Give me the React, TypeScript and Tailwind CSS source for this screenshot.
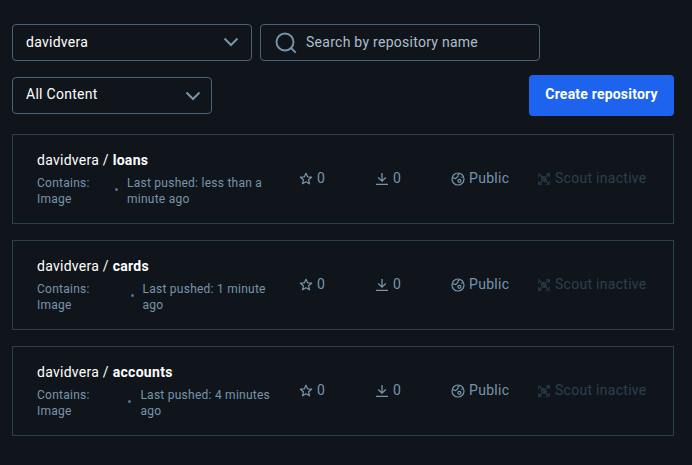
import React from "react";

type Repo = {
  name: string;
  pushed: [string, string];
  gap: string;
};

const repos: Repo[] = [
  { name: "loans", pushed: ["Last pushed: less than a", "minute ago"], gap: "w-[78px]" },
  { name: "cards", pushed: ["Last pushed: 1 minute", "ago"], gap: "w-[93.5px]" },
  { name: "accounts", pushed: ["Last pushed: 4 minutes", "ago"], gap: "w-[91.4px]" },
];

function Chevron() {
  return (
    <svg width="16" height="10" viewBox="0 0 16 10" fill="none" stroke="#7794AB" strokeWidth="2">
      <path d="M1.5 1.5 8 8l6.5-6.5" />
    </svg>
  );
}

function SearchIcon() {
  return (
    <svg width="22" height="22" viewBox="0 0 22 22" fill="none" stroke="#7794AB" strokeWidth="1.9">
      <circle cx="10" cy="10" r="8.5" />
      <path d="m16 16 4.7 4.7" />
    </svg>
  );
}

function StarIcon() {
  return (
    <svg className="mt-[2px]" width="14" height="14" viewBox="0 0 14 14" fill="none" stroke="currentColor" strokeWidth="1.2" strokeLinejoin="round">
      <path d="m7 1.2 1.6 3.6 4 .4-3 2.6.9 4L7 9.8l-3.5 2 .9-4-3-2.6 4-.4Z" />
    </svg>
  );
}

function DownloadIcon() {
  return (
    <svg className="mt-[2px]" width="12" height="12" viewBox="0 0 12 12" fill="none" stroke="currentColor" strokeWidth="1.3">
      <path d="M6 0v8M2.2 4.5 6 8.2l3.8-3.7M0 11.3h12" />
    </svg>
  );
}

function GlobeIcon() {
  return (
    <svg className="mt-[2px]" width="14" height="14" viewBox="0 0 14 14" fill="none" stroke="currentColor" strokeWidth="1.2">
      <circle cx="7" cy="7" r="6" />
      <path d="M1.3 5.6 4.6 6.6 7 4.2V2.8L9 1.6" />
      <circle cx="8.4" cy="8.8" r="1.5" />
      <path d="m9.8 5.4 2.6-.6" strokeWidth="0.9" />
    </svg>
  );
}

function ScoutIcon() {
  return (
    <svg className="mt-[2px]" width="12" height="12" viewBox="0 0 12 12" fill="none" stroke="currentColor" strokeWidth="1.2">
      <path d="m.4.4 11.2 11.2" />
      <path d="M11.5.5 8.4 3.6M.5 11.5l3.1-3.1" />
      <path d="M8.2.7h3.1v3.1M.7 8.2v3.1h3.1M.6 2.2v2.2M11.4 7.8v2M7.8 11.4h2" strokeWidth="1" />
      <path d="M4.6 3.7 7.2 4l1.1 3.2M3.6 4.8l.6 2.8 2.8.8" />
    </svg>
  );
}

function RepoCard({ name, pushed, gap }: Repo) {
  return (
    <article className="flex h-[90px] border border-[#2B404E] pl-6 text-[#7794AB]">
      <div className="w-[262px] shrink-0 pt-[15px]">
        <h2 className="whitespace-pre text-[14px] leading-[20px] text-white">
          <span className="tracking-[0.27px]">davidvera / </span>
          <span className="font-bold tracking-[0.3px]">{name}</span>
        </h2>
        <div className="mt-[5px] flex whitespace-nowrap text-[12px] leading-4 tracking-[0.25px]">
          <div className={gap + " shrink-0"}>
            Contains:
            <br />
            Image
          </div>
          <span className="mt-[13px] mr-[9px] size-[3px] shrink-0 rounded-full bg-[#55728A]" />
          <div>
            {pushed[0]}
            <br />
            {pushed[1]}
          </div>
        </div>
      </div>
      <div className="flex h-[86px] items-center text-[14px] leading-5">
        <span className="flex w-[77px] items-center gap-1"><StarIcon />0</span>
        <span className="flex w-[75px] items-center gap-[5px]"><DownloadIcon />0</span>
        <span className="flex w-[87px] items-center gap-1 tracking-[0.3px]"><GlobeIcon />Public</span>
        <span className="flex items-center gap-[5px] whitespace-nowrap tracking-[0.28px] text-[#2B404E]"><ScoutIcon />Scout inactive</span>
      </div>
    </article>
  );
}

export default function App() {
  return (
    <main className="h-[465px] w-[692px] overflow-hidden bg-[#10151B] pt-6 pr-[18px] pl-3 font-['Roboto',sans-serif]">
      <div className="flex gap-2">
        <button className="flex h-[37px] w-[240px] items-center justify-between rounded-[4px] border border-[#46647A] pr-3 pl-[13px] text-[14px] text-white">
          <span className="tracking-[0.27px]">davidvera</span>
          <span className="-mt-[2px]"><Chevron /></span>
        </button>
        <div className="flex h-[37px] w-[280px] items-center gap-[9px] rounded-[4px] border border-[#46647A] pl-[14px] text-[14px] text-[#ADBECB]">
          <SearchIcon />
          <span className="tracking-[0.27px]">Search by repository name</span>
        </div>
      </div>
      <div className="mt-[14px] flex h-[41px] items-start justify-between">
        <button className="mt-[2px] flex h-[37px] w-[200px] items-center justify-between rounded-[4px] border border-[#46647A] pr-[10px] pl-[13px] text-[14px] text-white">
          <span className="-mt-[3px] tracking-[0.27px]">All Content</span>
          <Chevron />
        </button>
        <button className="h-[41px] w-[145px] rounded-[4px] bg-[#1D63ED] pb-[3px] text-[14px] font-bold tracking-[0.2px] text-white">
          Create repository
        </button>
      </div>
      <section className="mt-[18px] flex flex-col gap-4">
        {repos.map((repo) => (
          <RepoCard key={repo.name} {...repo} />
        ))}
      </section>
    </main>
  );
}
